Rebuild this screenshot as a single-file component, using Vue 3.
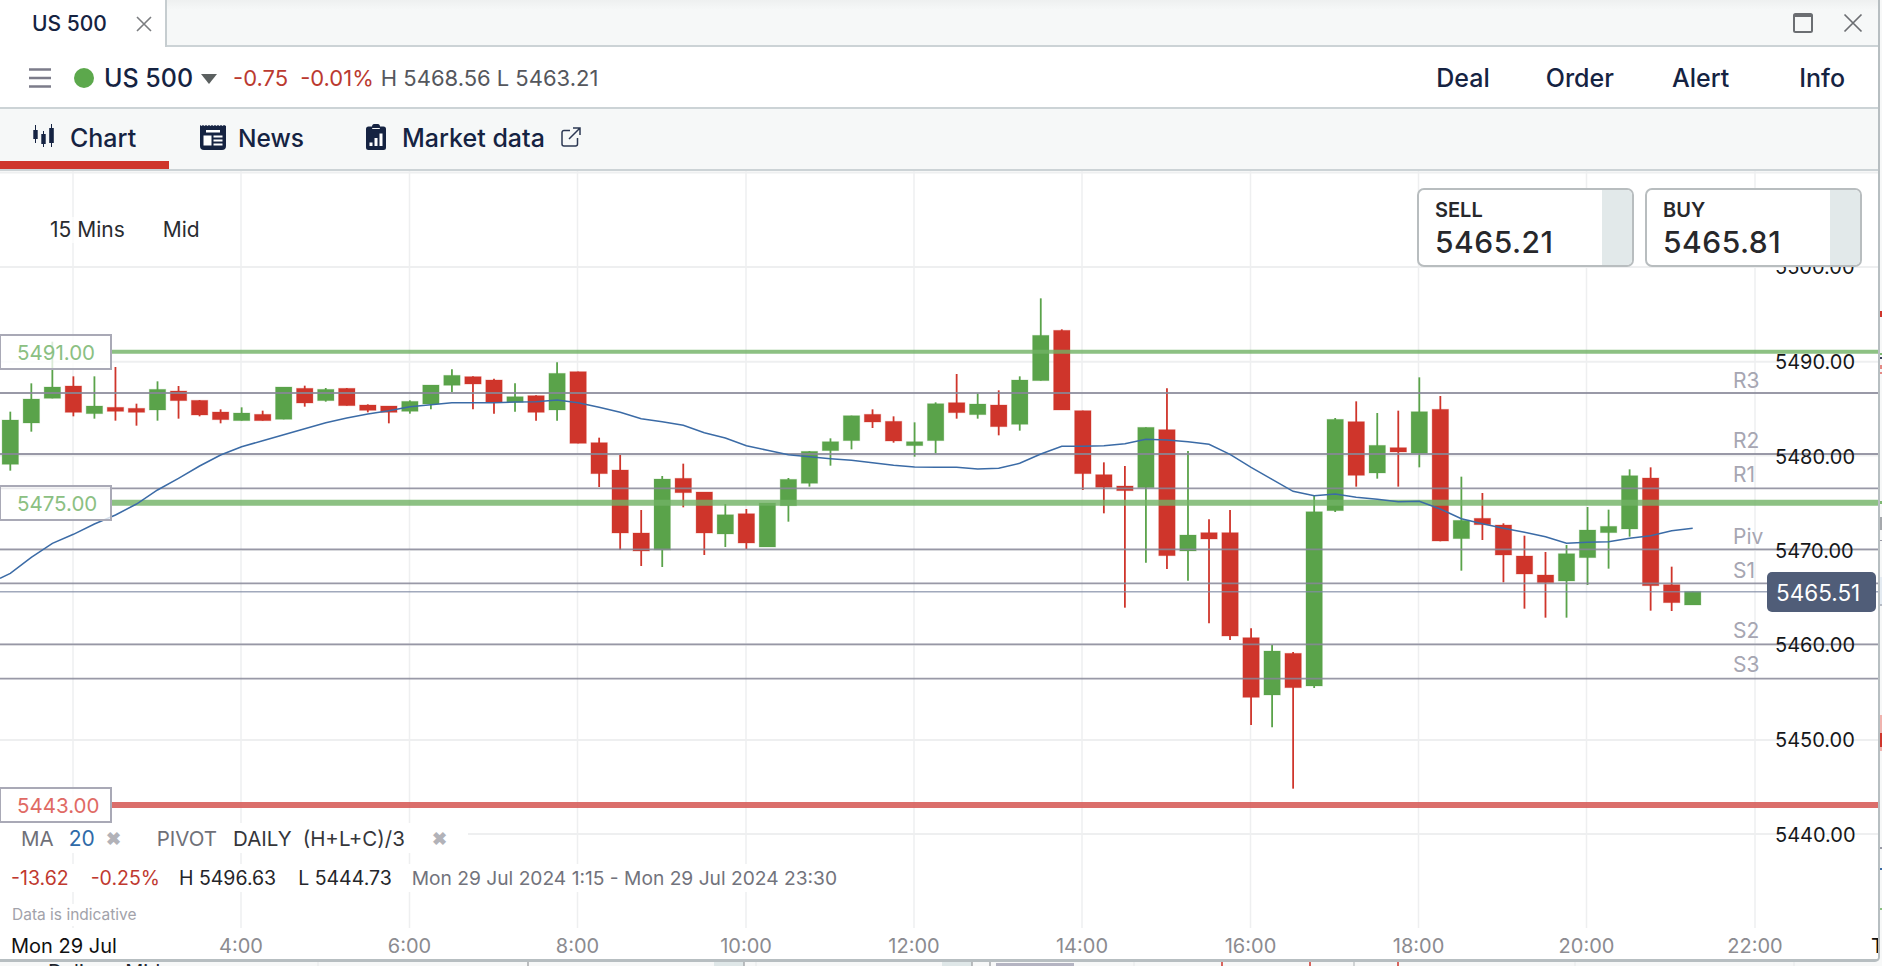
<script setup>
const CX = (i) => 10.3 + 21.03 * i
const conv = (y0, list) => list.map(([t, a, b, c, d]) => ({ t, wt: y0 + a / 3, bt: y0 + b / 3, bb: y0 + c / 3, wb: y0 + d / 3 }))
const real = (list) => list.map(([t, a, b, c, d]) => ({ t, wt: a, bt: b, bb: c, wb: d }))
const raw = [
  ...conv(320, [['g',275,300,433,452],['g',190,237,309,335],['g',65,201,235,235],['r',169,198,277,289],['g',169,258,281,296],['r',141,262,274,302],['r',251,265,277,317],['g',184,208,270,302],['r',198,213,242,296],['r',240,241,285,289],['r',268,276,299,310],['g',262,279,302,302],['r',272,283,302,302],['g',201,201,298,298],['r',197,205,249,260],['g',204,208,242,245],['r',204,205,257,257],['r',253,255,271,277],['r',258,258,277,310],['g',241,244,274,281],['g',195,195,252,268],['g',148,166,196,216],['r',169,170,192,268],['r',176,180,247,281],['g',190,230,247,275],['r',226,227,277,302],['g',127,160,270,302],['r',155,155,370,370],['r',353,368,461,501]]),
  ...real([['r',455,470,533,550],['r',510,533,551,566],['g',476,479,550,567]]),
  ...conv(280, [['r',551,595,638,682]]),
  ...real([['r',492,492,533,555],['g',504,514.7,534,547],['r',509,513.7,543,549],['g',503,503,547,547]]),
  ...conv(280, [['g',594,598,677,725],['g',513,514,610,620],['g',475,485,512,557],['g',407,407,482,508],['r',388,403,426,444],['r',409,424,483,488],['g',427,485,497,530],['g',367,371,482,520],['r',282,368,398,416],['g',340,372,404,416],['r',331,375,440,466],['g',289,300,433,452],['g',55,166,302,302],['r',148,151,390,390],['r',392,392,581,630],['r',547,584,622,700]]),
  ...conv(360, [['r',318,378,392,743],['g',202,202,383,608],['r',85,209,587,627],['g',273,525,573,662],['r',478,518,537,790],['r',450,518,828,840]]),
  ...conv(540, [['r',265,293,472,555],['g',315,333,465,562],['r',336,340,443,746]]),
  ...real([['g',495,511.7,686,688]]),
  ...conv(360, [['g',174,178,452,456],['r',124,185,346,380],['g',159,256,339,356],['r',152,263,276,380],['g',52,155,280,322],['r',108,148,543,544],['g',350,481,536,632],['r',399,475,494,540],['r',490,495,585,667],['r',527,588,642,746],['r',576,645,668,773],['g',555,581,663,773],['g',441,510,593,675],['g',449,499,518,626],['g',328,347,507,530],['r',322,354,677,752],['r',620,674,728,753],['g',694,694,735,735]])
]
const candles = raw.map((c, i) => ({ ...c, x: CX(i), fill: c.t === 'g' ? '#5aa34a' : '#cf352b', halo: c.t === 'g' ? 'rgba(90,163,74,.25)' : 'rgba(207,53,43,.3)' }))

const ma = [
  ...[760,712,670,643,612,585,552,510,475,438,405,380,362,344,326,308,294,282,272,260,254,248,248,248,246,245,240,248,262].map((z) => 320 + z / 3),
  ...[397,416,425,436,458,474,497,511,524,530,536,541,548,556,561,562,562,567,565,550,522,499,499,497,491,478,480,485,493].map((z) => 280 + z / 3),
  ...[283,322,358,394,407,402,412,418,425,424,447,476,491,505,517,530,550,547,545,535,527,512,505].map((z) => 360 + z / 3)
]
const maPoints = '0,578.3 ' + ma.map((y, i) => `${CX(i).toFixed(1)},${y.toFixed(1)}`).join(' ')

const hGrid = [172.5, 267, 361.7, 455.5, 550, 644.5, 740, 834]
const vGrid = [73, 241, 409.5, 577.5, 746, 914, 1082, 1250.5, 1418.5, 1586.5, 1755]
const pivots = [
  { y: 393, name: 'R3', ly: 380.5 }, { y: 454, name: 'R2', ly: 440.5 }, { y: 488.3, name: 'R1', ly: 474.5 },
  { y: 549.3, name: 'Piv', ly: 537 }, { y: 583.3, name: 'S1', ly: 571 }, { y: 644.3, name: 'S2', ly: 631 }, { y: 678.7, name: 'S3', ly: 664.5 }
]
const levels = [
  { y: 351.7, h: 4, c: 'rgba(112,178,100,.8)', label: '5491.00', cls: 'lv-green' },
  { y: 502.7, h: 6, c: 'rgba(112,178,100,.8)', label: '5475.00', cls: 'lv-green' },
  { y: 805, h: 6, c: 'rgba(214,90,86,.88)', label: '5443.00', cls: 'lv-red' }
]
const yAxis = [['5500.00', 267], ['5490.00', 362], ['5480.00', 456.7], ['5470.00', 550.5], ['5460.00', 645], ['5450.00', 740], ['5440.00', 835]]
const xAxis = [['4:00', 241], ['6:00', 409.5], ['8:00', 577.5], ['10:00', 746], ['12:00', 914], ['14:00', 1082], ['16:00', 1250.5], ['18:00', 1418.5], ['20:00', 1586.5], ['22:00', 1755]]
const top = (y) => ({ top: `${y - 171}px` })
const left = (x) => ({ left: `${x}px` })

const stripBits = [
  [311, 6, '#cf352b'], [353, 2, '#7fb873'], [357, 2, '#39425c'], [365, 4, '#e48a85'], [372, 2, '#e48a85'],
  [501, 3, '#7fb873'], [517, 13, '#a5a8ac'], [540, 1, '#9a9aa6'], [577, 27, '#e4ebf2'], [604, 2, '#b5bac4'],
  [715, 18, '#f0b3ae'], [733, 14, '#cf352b'], [747, 4, '#f0b3ae'], [847, 2, '#9a9aa6'], [868, 2, '#3a6ba5'], [908, 2, '#8abf80']
]
const underLines = [
  [318, '#e6e8e9', 1], [528, '#a7aaad', 1.5], [744, '#a7aaad', 1.5], [756, '#e6e8e9', 1], [972, '#a7aaad', 1.5], [990, '#a7aaad', 1.5],
  [1134, '#e6e8e9', 1], [1222, '#cf352b', 1.5], [1310, '#cf352b', 1.5], [1354, '#c5c8ca', 1.5], [1398, '#cf352b', 1.5], [1575, '#e6e8e9', 1], [1794, '#e6e8e9', 1]
]
</script>

<template>
  <div class="page">
    <svg class="under" width="1882" height="966" viewBox="0 0 1882 966">
      <rect x="714" y="958" width="30" height="8" fill="#dfe7e8" />
      <rect x="942" y="958" width="30" height="8" fill="#dfe7e8" />
      <rect x="996" y="963" width="78" height="3" fill="#b4b4c2" />
      <line v-for="(l, i) in underLines" :key="i" :x1="l[0]" :x2="l[0]" y1="958" y2="966" :stroke="l[1]" :stroke-width="l[2]" />
      <text x="48" y="979" class="under-text">Deliver: Mid</text>
      <rect v-for="(b, i) in stripBits" :key="'s' + i" x="1880" :y="b[0]" width="2" :height="b[1]" :fill="b[2]" />
    </svg>

    <div class="window">
      <div class="tabbar">
        <div class="tab">
          <span class="tab-name">US 500</span>
          <svg width="16" height="16" viewBox="0 0 16 16" class="tab-close"><path d="M1 1l14 14M15 1L1 15" stroke="#7b7d80" stroke-width="1.6" fill="none" /></svg>
        </div>
        <div class="tab-rest">
          <svg width="20" height="20" viewBox="0 0 20 20"><rect x="1" y="1" width="18" height="18" rx="1.5" fill="none" stroke="#6b6e72" stroke-width="2" /><rect x="1" y="1" width="18" height="3" fill="#6b6e72" /></svg>
          <svg width="20" height="20" viewBox="0 0 20 20"><path d="M1.5 1.5l17 17M18.5 1.5l-17 17" stroke="#6b6e72" stroke-width="1.7" fill="none" /></svg>
        </div>
      </div>

      <div class="header">
        <svg class="burger" width="22" height="20" viewBox="0 0 22 20"><path d="M0 1.5h22M0 10h22M0 18.5h22" stroke="#7c7c8a" stroke-width="2.4" /></svg>
        <span class="dot"></span>
        <span class="sym">US 500</span>
        <svg class="caret" width="16" height="10" viewBox="0 0 16 10"><path d="M0 0h16L8 10z" fill="#5b6060" /></svg>
        <span class="chg first">-0.75</span>
        <span class="chg second">-0.01%</span>
        <span class="hl h">H 5468.56</span>
        <span class="hl l">L 5463.21</span>
        <nav class="actions">
          <span class="act deal">Deal</span>
          <span class="act order">Order</span>
          <span class="act alert">Alert</span>
          <span class="act info">Info</span>
        </nav>
      </div>

      <div class="nav">
        <div class="nav-item active">
          <svg width="24" height="24" viewBox="0 0 24 24" class="ic-chart"><path fill="#152342" d="M2 1h1v5h1.700v9H3v4H2v-4H.3V6H2zM10 7h1v3h1.700v10H11v3h-1v-3H8.300V10H10zM18 0h1v4h1.800v15H19v4h-1v-4h-1.800V4H18z" /></svg>
          <span>Chart</span>
        </div>
        <div class="nav-item news">
          <svg width="26" height="26" viewBox="0 0 26 26"><path fill="#152342" d="M0 1l1.500 1L3 1l1.500 1L6 1l1.500 1L9 1l1.500 1L12 1l1.500 1L15 1l1.500 1L18 1l1.500 1L21 1l1.500 1L24 1l2 1v20a4 4 0 0 1-4 4H4a4 4 0 0 1-4-4z" /><path fill="#fff" d="M6 6h14v2.400H6zM3.500 11.500h8v10h-8zM13.500 11.500h9v2h-9zM13.500 15.500h9v2h-9zM13.500 19.500h9v2h-9z" /></svg>
          <span>News</span>
        </div>
        <div class="nav-item market">
          <svg width="20" height="26" viewBox="0 0 20 26"><path fill="#152342" d="M6 2.500C6 1 7 0 8 0h4c1 0 2 1 2 2.500h3.500A2.500 2.500 0 0 1 20 5v18.500a2.500 2.500 0 0 1-2.500 2.500h-15A2.500 2.500 0 0 1 0 23.500V5a2.500 2.500 0 0 1 2.500-2.500z" /><path fill="#f6f8f8" d="M6.200 4h7.600v1H6.200z" /><path fill="#fff" d="M3.500 18.500h3V22h-3zM8.500 14h3v8h-3zM13.500 9.500h3V22h-3z" /></svg>
          <span>Market data</span>
          <svg width="20" height="20" viewBox="0 0 20 20" class="ext"><path d="M9 3.500H3A2 2 0 0 0 1 5.500v11.500a2 2 0 0 0 2 2h11.500a2 2 0 0 0 2-2V11M8 12L19 1M12 1h7v7" fill="none" stroke="#2c3853" stroke-width="1.500" /></svg>
        </div>
      </div>

      <div class="chart">
        <svg class="plot" width="1878" height="788" viewBox="0 171 1878 788">
          <line v-for="y in hGrid" :key="'h' + y" x1="0" x2="1878" :y1="y" :y2="y" stroke="#eeeff0" stroke-width="2" />
          <line v-for="x in vGrid" :key="'v' + x" :x1="x" :x2="x" y1="171" y2="928" stroke="#eeeff0" stroke-width="1.500" />
          <g v-for="(c, i) in candles" :key="'c' + i">
            <line :x1="c.x" :x2="c.x" :y1="c.wt" :y2="c.wb" :stroke="c.fill" stroke-width="1.800" />
            <rect :x="c.x - 8.200" :y="c.bt" width="16.400" :height="c.bb - c.bt" :fill="c.fill" :stroke="c.halo" stroke-width="1" />
          </g>
          <line x1="0" x2="1878" y1="591.700" y2="591.700" stroke="rgba(130,140,165,.75)" stroke-width="1.500" />
          <line v-for="p in pivots" :key="p.name" x1="0" x2="1878" :y1="p.y" :y2="p.y" stroke="rgba(135,135,152,.85)" stroke-width="1.800" />
          <line v-for="l in levels" :key="l.label" x1="112" x2="1878" :y1="l.y" :y2="l.y" :stroke="l.c" :stroke-width="l.h" />
          <polyline :points="maPoints" fill="none" stroke="#3b6ba6" stroke-width="1.500" />
        </svg>

        <div class="period"><span class="p-mins">15 Mins</span><span class="p-mid">Mid</span></div>

        <span v-for="a in yAxis" :key="a[0]" class="y-label" :style="top(a[1])">{{ a[0] }}</span>
        <span v-for="p in pivots" :key="'n' + p.name" class="pv-label" :style="top(p.ly)">{{ p.name }}</span>
        <div class="price-tag">5465.51</div>
        <div v-for="l in levels" :key="'b' + l.label" class="level-box" :class="l.cls" :style="top(l.y)">{{ l.label }}</div>

        <div class="quotes">
          <div class="quote">
            <div class="q-main"><div class="q-label">SELL</div><div class="q-price">5465.21</div></div>
            <div class="q-side"></div>
          </div>
          <div class="quote">
            <div class="q-main"><div class="q-label">BUY</div><div class="q-price">5465.81</div></div>
            <div class="q-side"></div>
          </div>
        </div>

        <div class="legend">
          <div class="lg-row lg-ind">
            <span class="g1">MA</span><span class="blue">20</span><span class="x">✖</span>
            <span class="g2">PIVOT</span><span class="dk">DAILY</span><span class="dk f">(H+L+C)/3</span><span class="x x2">✖</span>
          </div>
          <div class="lg-row lg-stats">
            <span class="red">-13.62</span><span class="red r2">-0.25%</span>
            <span class="st s1">H 5496.63</span><span class="st s2">L 5444.73</span>
            <span class="range">Mon 29 Jul 2024 1:15 - Mon 29 Jul 2024 23:30</span>
          </div>
          <div class="indic">Data is indicative</div>
        </div>

        <div class="x-axis">
          <span class="x-date">Mon 29 Jul</span>
          <span v-for="t in xAxis" :key="t[0]" class="x-label" :style="left(t[1])">{{ t[0] }}</span>
          <span class="x-next">Tue</span>
        </div>
      </div>
    </div>
  </div>
</template>

<style>
html, body { margin: 0; padding: 0; background: #f7f8f8; overflow: hidden; }
</style>

<style scoped>
.page { position: relative; width: 1882px; height: 966px; overflow: hidden; font-family: Inter, "Liberation Sans", sans-serif; background: #f7f8f8; }
.under { position: absolute; inset: 0; }
.under-text { font-family: Inter, sans-serif; font-size: 20px; fill: #20242c; }
.window { position: relative; width: 1878px; height: 959px; background: #fff; border-right: 2px solid #b7bec1; border-bottom: 3px solid #b7bec1; border-bottom-right-radius: 5px; display: flex; flex-direction: column; overflow: hidden; }
.tabbar { height: 47px; flex: none; display: flex; background: linear-gradient(#eef0f0 0, #f6f8f8 10px); }
.tab { flex: none; background: #fff; border-right: 2px solid #c6cdd0; display: flex; align-items: center; padding-left: 32px; box-sizing: border-box; width: 167px; }
.tab-name { font-size: 21px; font-weight: 500; color: #152342; }
.tab-close { margin-left: 29px; }
.tab-rest { flex: 1; border-bottom: 2px solid #ccd3d6; display: flex; justify-content: flex-end; align-items: center; gap: 30px; padding-right: 15px; box-sizing: border-box; }
.header { height: 62px; flex: none; border-bottom: 2px solid #ccd3d6; box-sizing: border-box; display: flex; align-items: center; padding-left: 29px; padding-top: 1px; background: #fff; }
.burger { flex: none; }
.dot { width: 20px; height: 20px; border-radius: 50%; background: #5ca84c; margin-left: 23px; }
.sym { font-size: 25px; font-weight: 500; color: #152342; margin-left: 10px; }
.caret { margin-left: 8px; margin-top: 2px; }
.chg { font-size: 22px; color: #bb3a30; }
.chg.first { margin-left: 16px; }
.chg.second { margin-left: 12px; }
.hl { font-size: 22px; color: #55575d; }
.hl.h { margin-left: 7px; }
.hl.l { margin-left: 6px; }
.actions { margin-left: auto; display: flex; padding-right: 33px; }
.act { font-size: 25px; font-weight: 500; color: #152342; }
.order { margin-left: 56px; }
.alert { margin-left: 58px; }
.info { margin-left: 70px; }
.nav { height: 62px; flex: none; background: #f6f8f8; border-bottom: 2px solid #ccd3d6; box-sizing: border-box; display: flex; position: relative; }
.nav-item { display: flex; align-items: center; font-size: 25px; font-weight: 500; color: #152342; padding-bottom: 2px; box-sizing: border-box; }
.nav-item svg { position: relative; top: -1px; }
.nav-item.active { width: 169px; padding-left: 33px; gap: 13px; border-bottom: 8px solid #cf352b; padding-bottom: 0; }
.nav-item.active svg { top: 1px; }
.nav-item.active span { position: relative; top: 3px; }
.nav-item.news { margin-left: 31px; gap: 12px; font-size: 24.5px; }
.nav-item.market { margin-left: 62px; gap: 16px; }
.chart { position: relative; flex: 1; overflow: hidden; background: #fff; }
.plot { position: absolute; left: 0; top: 0; }
.period { position: absolute; left: 50px; top: 46px; font-size: 21px; color: #2a2c30; line-height: 26px; display: flex; background: rgba(255,255,255,.7); }
.p-mid { margin-left: 38px; }
.quotes { position: absolute; right: 16px; top: 17px; display: flex; gap: 11px; }
.quote { width: 217px; height: 79px; box-sizing: border-box; border: 2px solid #b8bdbf; border-radius: 7px; background: #fff; display: flex; overflow: hidden; color: #27282b; }
.q-main { flex: 1; padding: 8px 0 0 16px; }
.q-label { font-size: 20px; font-weight: 600; line-height: 24px; }
.q-price { font-size: 30px; font-weight: 500; line-height: 34px; letter-spacing: .5px; margin-top: 3px; }
.q-side { background: #e2e9ea; flex: none; width: 30px; }
.y-label { position: absolute; left: 1775px; font-size: 20px; color: #15171a; transform: translateY(-50%); line-height: 24px; white-space: nowrap; }
.pv-label { position: absolute; left: 1733px; font-size: 21px; color: #a6a6b2; transform: translateY(-50%); line-height: 24px; }
.price-tag { position: absolute; left: 1767px; top: 401px; width: 109px; height: 40px; box-sizing: border-box; padding-left: 9px; border-radius: 5px; background: #505d78; color: #fff; font-size: 22.5px; display: flex; align-items: center; }
.level-box { position: absolute; left: 0; width: 112px; height: 36px; box-sizing: border-box; border: 2px solid #a9a9b6; border-left-width: 1px; background: rgba(255,255,255,.78); transform: translateY(-50%); font-size: 20.5px; line-height: 33px; padding-left: 16px; }
.lv-green { color: #8bc082; }
.lv-red { color: #e06a64; }
.legend { position: absolute; left: 0; top: 652px; width: 860px; }
.lg-row { display: flex; align-items: center; background: #fff; white-space: nowrap; }
.lg-ind { height: 30px; width: 468px; font-size: 20.5px; box-sizing: border-box; padding-left: 21px; }
.g1 { color: #6f7078; }
.blue { color: #2f6aa8; margin-left: 15px; font-size: 21px; }
.x { color: #b2b2b8; font-weight: 700; font-size: 18px; margin-left: 11px; }
.g2 { color: #6f7078; margin-left: 36px; }
.dk { color: #35363a; margin-left: 16px; }
.dk.f { margin-left: 11px; }
.x2 { margin-left: 27px; }
.lg-stats { height: 28px; margin-top: 11px; font-size: 19.5px; padding-left: 11px; width: 850px; }
.red { color: #c0392f; }
.r2 { margin-left: 22px; }
.st { color: #25262a; }
.s1 { margin-left: 19px; }
.s2 { margin-left: 22px; }
.range { color: #72737c; margin-left: 20px; font-size: 19.2px; }
.indic { font-size: 15.5px; color: #a2a2aa; margin-top: 12px; margin-left: 12px; line-height: 22px; background: #fff; display: inline-block; }
.x-axis { position: absolute; left: 0; right: 0; top: 757px; height: 31px; background: #fff; overflow: hidden; }
.x-date { position: absolute; left: 11px; top: 6px; font-size: 20px; line-height: 24px; color: #111; white-space: nowrap; }
.x-label { position: absolute; top: 6px; font-size: 20px; line-height: 24px; color: #8b8b90; transform: translateX(-50%); }
.x-next { position: absolute; left: 1871px; top: 6px; font-size: 20px; line-height: 24px; color: #111; }
</style>
